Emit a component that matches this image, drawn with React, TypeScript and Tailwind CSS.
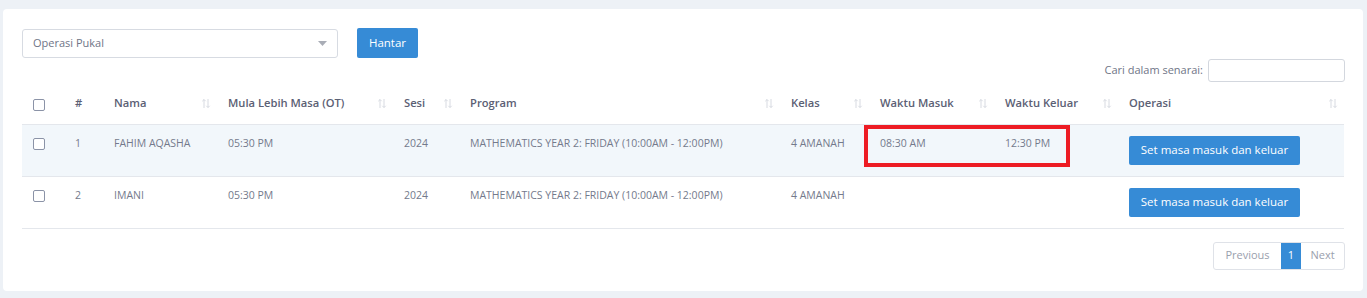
import React from "react";

const font = { fontFamily: '"Open Sans", "Noto Sans", sans-serif' };

function SortIcon() {
  return (
    <svg width="10" height="11" viewBox="0 0 10 11" className="shrink-0">
      <path d="M3 10V1.5M1.3 3.2L3 1.5L4.7 3.2" stroke="#d3d6de" strokeWidth="0.9" fill="none" />
      <path d="M7 1v8.5M5.3 7.8L7 9.5L8.7 7.8" stroke="#d3d6de" strokeWidth="0.9" fill="none" />
    </svg>
  );
}

function Check() {
  return <span className="inline-block w-[12px] h-[12px] rounded-[2px] border border-[#8b93a7] bg-white" />;
}

const cols = [42, 39, 114, 176, 66, 321, 89, 125, 124, 226];
const heads = ["", "#", "Nama", "Mula Lebih Masa (OT)", "Sesi", "Program", "Kelas", "Waktu Masuk", "Waktu Keluar", "Operasi"];

const rows = [
  { n: "1", nama: "FAHIM AQASHA", masuk: "08:30 AM", keluar: "12:30 PM", hl: true },
  { n: "2", nama: "IMANI", masuk: "", keluar: "", hl: false },
];

export default function App() {
  return (
    <div className="w-[1367px] h-[298px] bg-[#edf1f6] pt-[9px] pl-[3px]" style={font}>
      <div className="relative w-[1360px] h-[282px] bg-white rounded-[4px] pt-[19px] pl-[19px] pr-[18px]">
        <div className="flex items-center gap-[19px]">
          <div className="w-[316px] h-[29px] border border-[#d7dbe2] rounded-[3px] flex items-center justify-between pl-[10px] pr-[10px]">
            <span className="text-[11px] text-[#6f7587]">Operasi Pukal</span>
            <svg width="9" height="5" viewBox="0 0 9 5"><path d="M0 0h9L4.5 5z" fill="#a9adb6" /></svg>
          </div>
          <button className="h-[30px] w-[61px] bg-[#368bd6] rounded-[2px] text-white text-[11.5px] font-medium">Hantar</button>
        </div>
        <div className="flex justify-end items-center gap-[5px] mt-[1px]">
          <span className="text-[11px] text-[#6f7587]">Cari dalam senarai:</span>
          <div className="w-[137px] h-[23px] border border-[#d3d7de] rounded-[3px]" />
        </div>
        <table className="border-collapse table-fixed w-[1322px]">
          <colgroup>
            {cols.map((w, i) => (
              <col key={i} style={{ width: w }} />
            ))}
          </colgroup>
          <thead>
            <tr className="h-[42px] border-b border-[#e4e7ec]">
              {heads.map((h, i) => (
                <th key={i} className="text-left align-middle pl-[11px] pr-[6px] pt-[2px]">
                  {i === 0 ? (
                    <div className="flex items-center pt-[3px]"><Check /></div>
                  ) : (
                    <div className="flex items-center justify-between">
                      <span className="text-[11.2px] font-semibold text-[#5b6074]">{h}</span>
                      {i > 1 && <SortIcon />}
                    </div>
                  )}
                </th>
              ))}
            </tr>
          </thead>
          <tbody className="text-[10.5px] text-[#747a8c]">
            {rows.map((r) => (
              <tr key={r.n} className={`h-[52px] border-b border-[#e4e7ec] ${r.hl ? "bg-[#f2f7fb]" : "bg-white"}`}>
                <td className="align-top pl-[11px] pt-[13px]"><Check /></td>
                <td className="align-top pl-[11px] pt-[11px]">{r.n}</td>
                <td className="align-top pl-[11px] pt-[11px]">{r.nama}</td>
                <td className="align-top pl-[11px] pt-[11px]">05:30 PM</td>
                <td className="align-top pl-[11px] pt-[11px]">2024</td>
                <td className="align-top pl-[11px] pt-[11px] whitespace-nowrap">MATHEMATICS YEAR 2: FRIDAY (10:00AM - 12:00PM)</td>
                <td className="align-top pl-[11px] pt-[11px]">4 AMANAH</td>
                <td className="align-top pl-[11px] pt-[11px]">{r.masuk}</td>
                <td className="align-top pl-[11px] pt-[11px]">{r.keluar}</td>
                <td className="align-top pl-[11px] pt-[11px]">
                  <button className="h-[29px] w-[171px] bg-[#368bd6] rounded-[2px] text-white text-[11.5px] font-medium">Set masa masuk dan keluar</button>
                </td>
              </tr>
            ))}
          </tbody>
        </table>
        <div className="flex justify-end mt-[13px]">
          <div className="flex h-[28px] border border-[#dfe2e8] rounded-[3px] text-[11px]">
            <span className="w-[67px] flex items-center justify-center text-[#9aa0ad]">Previous</span>
            <span className="w-[20px] flex items-center justify-center bg-[#368bd6] text-white">1</span>
            <span className="w-[43px] flex items-center justify-center text-[#9aa0ad]">Next</span>
          </div>
        </div>
        <div className="absolute left-[861px] top-[116px] w-[206px] h-[42px] border-[4px] border-[#ed1c24]" />
      </div>
    </div>
  );
}
